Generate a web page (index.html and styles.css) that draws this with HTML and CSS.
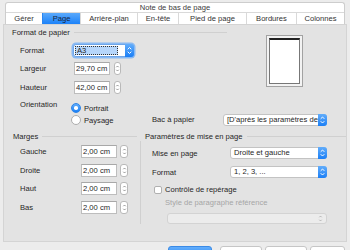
FILE: index.html
```html
<!DOCTYPE html>
<html lang="fr">
<head>
<meta charset="utf-8">
<title>Note de bas de page</title>
<link rel="stylesheet" href="styles.css">
</head>
<body>
<div class="head">
  <div class="title">Note de bas de page</div>
  <div class="tabs">
    <div class="tab t1">Gérer</div>
    <div class="tab t2 active">Page</div>
    <div class="tab t3">Arrière-plan</div>
    <div class="tab t4">En-tête</div>
    <div class="tab t5">Pied de page</div>
    <div class="tab t6">Bordures</div>
    <div class="tab t7">Colonnes</div>
  </div>
</div>

<div class="panel">
  <div class="paper">
    <div class="paper-main">
      <div class="fs-head">Format de papier</div>
      <div class="prow r-format">
        <span class="lbl">Format</span>
        <div class="sel sel-format focus">
          <span class="sel-text"><span class="hl">A3</span></span>
          <span class="sel-btn"><svg viewBox="0 0 9 12"><path d="M2.7 4.8 L4.5 3 L6.3 4.8 M2.7 7.2 L4.5 9 L6.3 7.2"/></svg></span>
        </div>
      </div>
      <div class="prow r-larg">
        <span class="lbl lbl-w">Largeur</span>
        <div class="inp">29,70 cm</div>
        <div class="spin"><svg viewBox="0 0 6 11"><path d="M1.5 4 L3 2.5 L4.5 4 M1.5 7 L3 8.5 L4.5 7"/></svg></div>
      </div>
      <div class="prow r-haut">
        <span class="lbl lbl-w">Hauteur</span>
        <div class="inp">42,00 cm</div>
        <div class="spin"><svg viewBox="0 0 6 11"><path d="M1.5 4 L3 2.5 L4.5 4 M1.5 7 L3 8.5 L4.5 7"/></svg></div>
      </div>
    </div>
    <div class="preview"><div class="page"></div></div>
  </div>

  <div class="orow1">
    <span class="olbl">Orientation</span>
    <div class="ropt"><span class="radio on"></span><span>Portrait</span></div>
  </div>
  <div class="orow2">
    <span class="ospacer"></span>
    <div class="ropt ropt-p"><span class="radio"></span><span>Paysage</span></div>
    <span class="bac-lbl">Bac à papier</span>
    <div class="sel sel-bac">
      <span class="sel-text">[D'après les paramètres de l'imprimante]</span>
      <span class="sel-btn"><svg viewBox="0 0 9 12"><path d="M2.7 4.8 L4.5 3 L6.3 4.8 M2.7 7.2 L4.5 9 L6.3 7.2"/></svg></span>
    </div>
  </div>

  <div class="settings">
    <div class="left">
      <div class="fs-head fs-left">Marges</div>
      <div class="left-body">
        <div class="mrow">
          <span class="mlbl">Gauche</span>
          <div class="inp">2,00 cm</div>
          <div class="spin spin-m"><svg viewBox="0 0 6 11"><path d="M1.5 4 L3 2.5 L4.5 4 M1.5 7 L3 8.5 L4.5 7"/></svg></div>
        </div>
        <div class="mrow">
          <span class="mlbl">Droite</span>
          <div class="inp">2,00 cm</div>
          <div class="spin spin-m"><svg viewBox="0 0 6 11"><path d="M1.5 4 L3 2.5 L4.5 4 M1.5 7 L3 8.5 L4.5 7"/></svg></div>
        </div>
        <div class="mrow">
          <span class="mlbl">Haut</span>
          <div class="inp">2,00 cm</div>
          <div class="spin spin-m"><svg viewBox="0 0 6 11"><path d="M1.5 4 L3 2.5 L4.5 4 M1.5 7 L3 8.5 L4.5 7"/></svg></div>
        </div>
        <div class="mrow">
          <span class="mlbl">Bas</span>
          <div class="inp">2,00 cm</div>
          <div class="spin spin-m"><svg viewBox="0 0 6 11"><path d="M1.5 4 L3 2.5 L4.5 4 M1.5 7 L3 8.5 L4.5 7"/></svg></div>
        </div>
      </div>
    </div>
    <div class="right">
      <div class="fs-head">Paramètres de mise en page</div>
      <div class="rrow rr1">
        <span class="rlbl">Mise en page</span>
        <div class="sel sel-r">
          <span class="sel-text">Droite et gauche</span>
          <span class="sel-btn"><svg viewBox="0 0 9 12"><path d="M2.7 4.8 L4.5 3 L6.3 4.8 M2.7 7.2 L4.5 9 L6.3 7.2"/></svg></span>
        </div>
      </div>
      <div class="rrow rr2">
        <span class="rlbl">Format</span>
        <div class="sel sel-r">
          <span class="sel-text">1, 2, 3, ...</span>
          <span class="sel-btn"><svg viewBox="0 0 9 12"><path d="M2.7 4.8 L4.5 3 L6.3 4.8 M2.7 7.2 L4.5 9 L6.3 7.2"/></svg></span>
        </div>
      </div>
      <div class="chkrow">
        <span class="chk"></span>
        <span>Contrôle de repérage</span>
      </div>
      <div class="dislbl">Style de paragraphe référence</div>
      <div class="sel-dis">
        <svg viewBox="0 0 6 11"><path d="M1.5 4 L3 2.5 L4.5 4 M1.5 7 L3 8.5 L4.5 7"/></svg>
      </div>
    </div>
  </div>
</div>

<div class="btns">
  <span class="btn blue"></span>
  <span class="btn b2"></span>
  <span class="btn b3"></span>
  <span class="btn b4"></span>
</div>
</body>
</html>
```

FILE: styles.css
```css
* { box-sizing: border-box; }
html, body { margin: 0; padding: 0; }
body {
  width: 350px;
  height: 250px;
  overflow: hidden;
  background: #ececec;
  font-family: "Liberation Sans", Arial, sans-serif;
  font-size: 7.6px;
  line-height: 9px;
  color: #262626;
}

/* header: title + tabs */
.head {
  margin: 2px 5px 0;
  background: #fff;
  border: 1px solid #cdcdcd;
  border-bottom: none;
  border-radius: 3px 3px 0 0;
}
.title {
  height: 10px;
  line-height: 10px;
  text-align: center;
  color: #3a3a3a;
  border-bottom: 1px solid #d9d9d9;
}
.tabs { display: flex; height: 11px; line-height: 11px; }
.tab { text-align: center; border-left: 1px solid #d9d9d9; color: #333; white-space: nowrap; }
.tab.t1 { border-left: none; width: 36px; }
.t2 { width: 38px; }
.t3 { width: 57px; }
.t4 { width: 41px; }
.t5 { width: 68px; }
.t6 { width: 50px; }
.t7 { flex: 1; }
.tab.active {
  background: linear-gradient(#5aa9fb, #1c82f9);
  border-left-color: #2a86f0;
  color: #17243a;
}

/* panel */
.panel {
  margin: 0 3px;
  height: 218px;
  background: #e3e3e3;
  border: 1px solid #d4d4d4;
  padding-left: 8px;
}
.paper { display: flex; }
.paper-main { width: 215px; }
.fs-head {
  display: flex;
  align-items: center;
  height: 9px;
  margin-top: 3px;
  white-space: nowrap;
}
.fs-head::after {
  content: "";
  flex: 1;
  height: 1px;
  background: #d0d0d0;
  margin-left: 4px;
}
.prow { display: flex; align-items: center; padding-left: 8px; height: 13px; }
.r-format { margin-top: 7px; }
.r-larg { margin-top: 5px; }
.r-haut { margin-top: 6px; }
.lbl { width: 53px; flex: none; }
.lbl-w { width: 54px; }

/* selects */
.sel {
  display: flex;
  height: 12px;
  background: #fff;
  border: 1px solid #c3c3c3;
  border-radius: 3px;
  flex: none;
}
.sel-text {
  flex: 1;
  min-width: 0;
  padding-left: 3px;
  line-height: 10px;
  white-space: nowrap;
  overflow: hidden;
}
.sel-btn {
  width: 9px;
  flex: none;
  margin: -1px -1px -1px 0;
  background: linear-gradient(#62adfb, #1b7ff6);
  border-radius: 0 3px 3px 0;
  display: flex;
}
.sel-btn svg { width: 9px; height: 12px; margin: auto; }
.sel-btn path { fill: none; stroke: #fff; stroke-width: 1; }
.sel-format { width: 61px; height: 13px; }
.sel-format .sel-btn svg { height: 13px; }
.sel.focus { box-shadow: 0 0 0 1.5px #89b9f2; border-color: #6ea6ea; }
.sel-format .sel-text { padding: 1px 7px 1px 1px; }
.hl {
  display: block;
  height: 100%;
  background: #b6d6fb;
  border: 1px dotted #333;
  padding-left: 1px;
  line-height: 8px;
}
.sel-bac { width: 104px; }
.sel-r { width: 97px; }

/* inputs */
.inp {
  width: 36px;
  height: 13px;
  flex: none;
  background: #fff;
  border: 1px solid #bdbdbd;
  border-top-color: #a8a8a8;
  padding-left: 1px;
  line-height: 11px;
  white-space: nowrap;
}
.spin {
  width: 7px;
  height: 13px;
  margin-left: 4px;
  flex: none;
  border: 1px solid #b9b9b9;
  border-radius: 3px;
  background: #fff;
  display: flex;
}
.spin svg { width: 5px; height: 11px; margin: auto; }
.spin path, .sel-dis path { fill: none; stroke: #666; stroke-width: 0.8; }
.spin-m { width: 8px; margin-left: 3px; }

/* preview */
.preview {
  margin: 10px 0 0 39px;
  width: 37px;
  height: 52px;
  border: 1px solid #a2a2a2;
  background: #f3f3f3;
  padding: 2px;
}
.page {
  height: 100%;
  background: #fff;
  border: 1px solid #777;
  border-top: 2px solid #222;
}

/* orientation */
.orow1 { display: flex; padding-left: 8px; height: 13px; margin-top: 6px; }
.olbl { width: 51px; flex: none; align-self: flex-start; }
.ropt { display: flex; align-items: center; gap: 3px; }
.orow1 .ropt { align-self: flex-end; }
.radio {
  width: 10px;
  height: 10px;
  border-radius: 50%;
  border: 1px solid #adadad;
  background: #fff;
  flex: none;
}
.radio.on {
  background: linear-gradient(#62adfb, #1a80f7);
  border-color: #2f84e6;
  display: flex;
}
.radio.on::after {
  content: "";
  width: 3.5px;
  height: 3.5px;
  border-radius: 50%;
  background: #fff;
  margin: auto;
}
.orow2 { display: flex; align-items: center; padding-left: 8px; height: 12px; margin-top: 1px; }
.ospacer { width: 51px; flex: none; }
.ropt-p { width: 81px; flex: none; }
.bac-lbl { width: 71px; flex: none; align-self: flex-start; margin-top: 1px; }

/* settings */
.settings { display: flex; margin-top: 6px; }
.left { width: 129px; flex: none; padding-left: 1px; }
.fs-head.fs-left, .right .fs-head { margin-top: 0; }
.fs-left { margin-right: 4px; }
.left-body {
  border-right: 1px solid #d0d0d0;
  height: 83px;
  padding-top: 4px;
}
.mrow { display: flex; align-items: center; height: 13px; padding-left: 7px; margin-top: 5.5px; }
.mrow:first-child { margin-top: 0; }
.mlbl { width: 61px; flex: none; }

.right { flex: 1; padding-left: 4px; }
.rrow { display: flex; align-items: center; height: 12px; padding-left: 7px; }
.rr1 { margin-top: 6px; }
.rr2 { margin-top: 7px; }
.rlbl { width: 78px; flex: none; }
.chkrow { display: flex; align-items: center; gap: 3px; height: 9px; margin-top: 7px; padding-left: 9px; }
.chk {
  width: 8px;
  height: 8px;
  background: #fff;
  border: 1px solid #b0b0b0;
  border-radius: 2px;
  flex: none;
}
.dislbl { margin-top: 4px; padding-left: 20px; color: #a6a6a6; height: 9px; }
.sel-dis {
  margin: 6px 0 0 22px;
  width: 160px;
  height: 11px;
  background: #ececec;
  border: 1px solid #d3d3d3;
  border-radius: 3px;
  display: flex;
  justify-content: flex-end;
  padding-right: 3px;
}
.sel-dis svg { width: 5px; height: 9px; }
.sel-dis path { stroke: #9a9a9a; }

/* bottom buttons (only top edge visible) */
.btns { display: flex; margin-top: 4px; padding-left: 168px; }
.btn {
  height: 14px;
  border-radius: 3px;
  background: #fff;
  border: 1px solid #c6c6c6;
}
.btn.blue { width: 44px; background: linear-gradient(#62adfb, #1b7ff6); border-color: #3a8ae6; }
.b2 { width: 42px; margin-left: 8px; }
.b3 { width: 42px; margin-left: 3px; }
.b4 { width: 35px; margin-left: 3px; }
```
